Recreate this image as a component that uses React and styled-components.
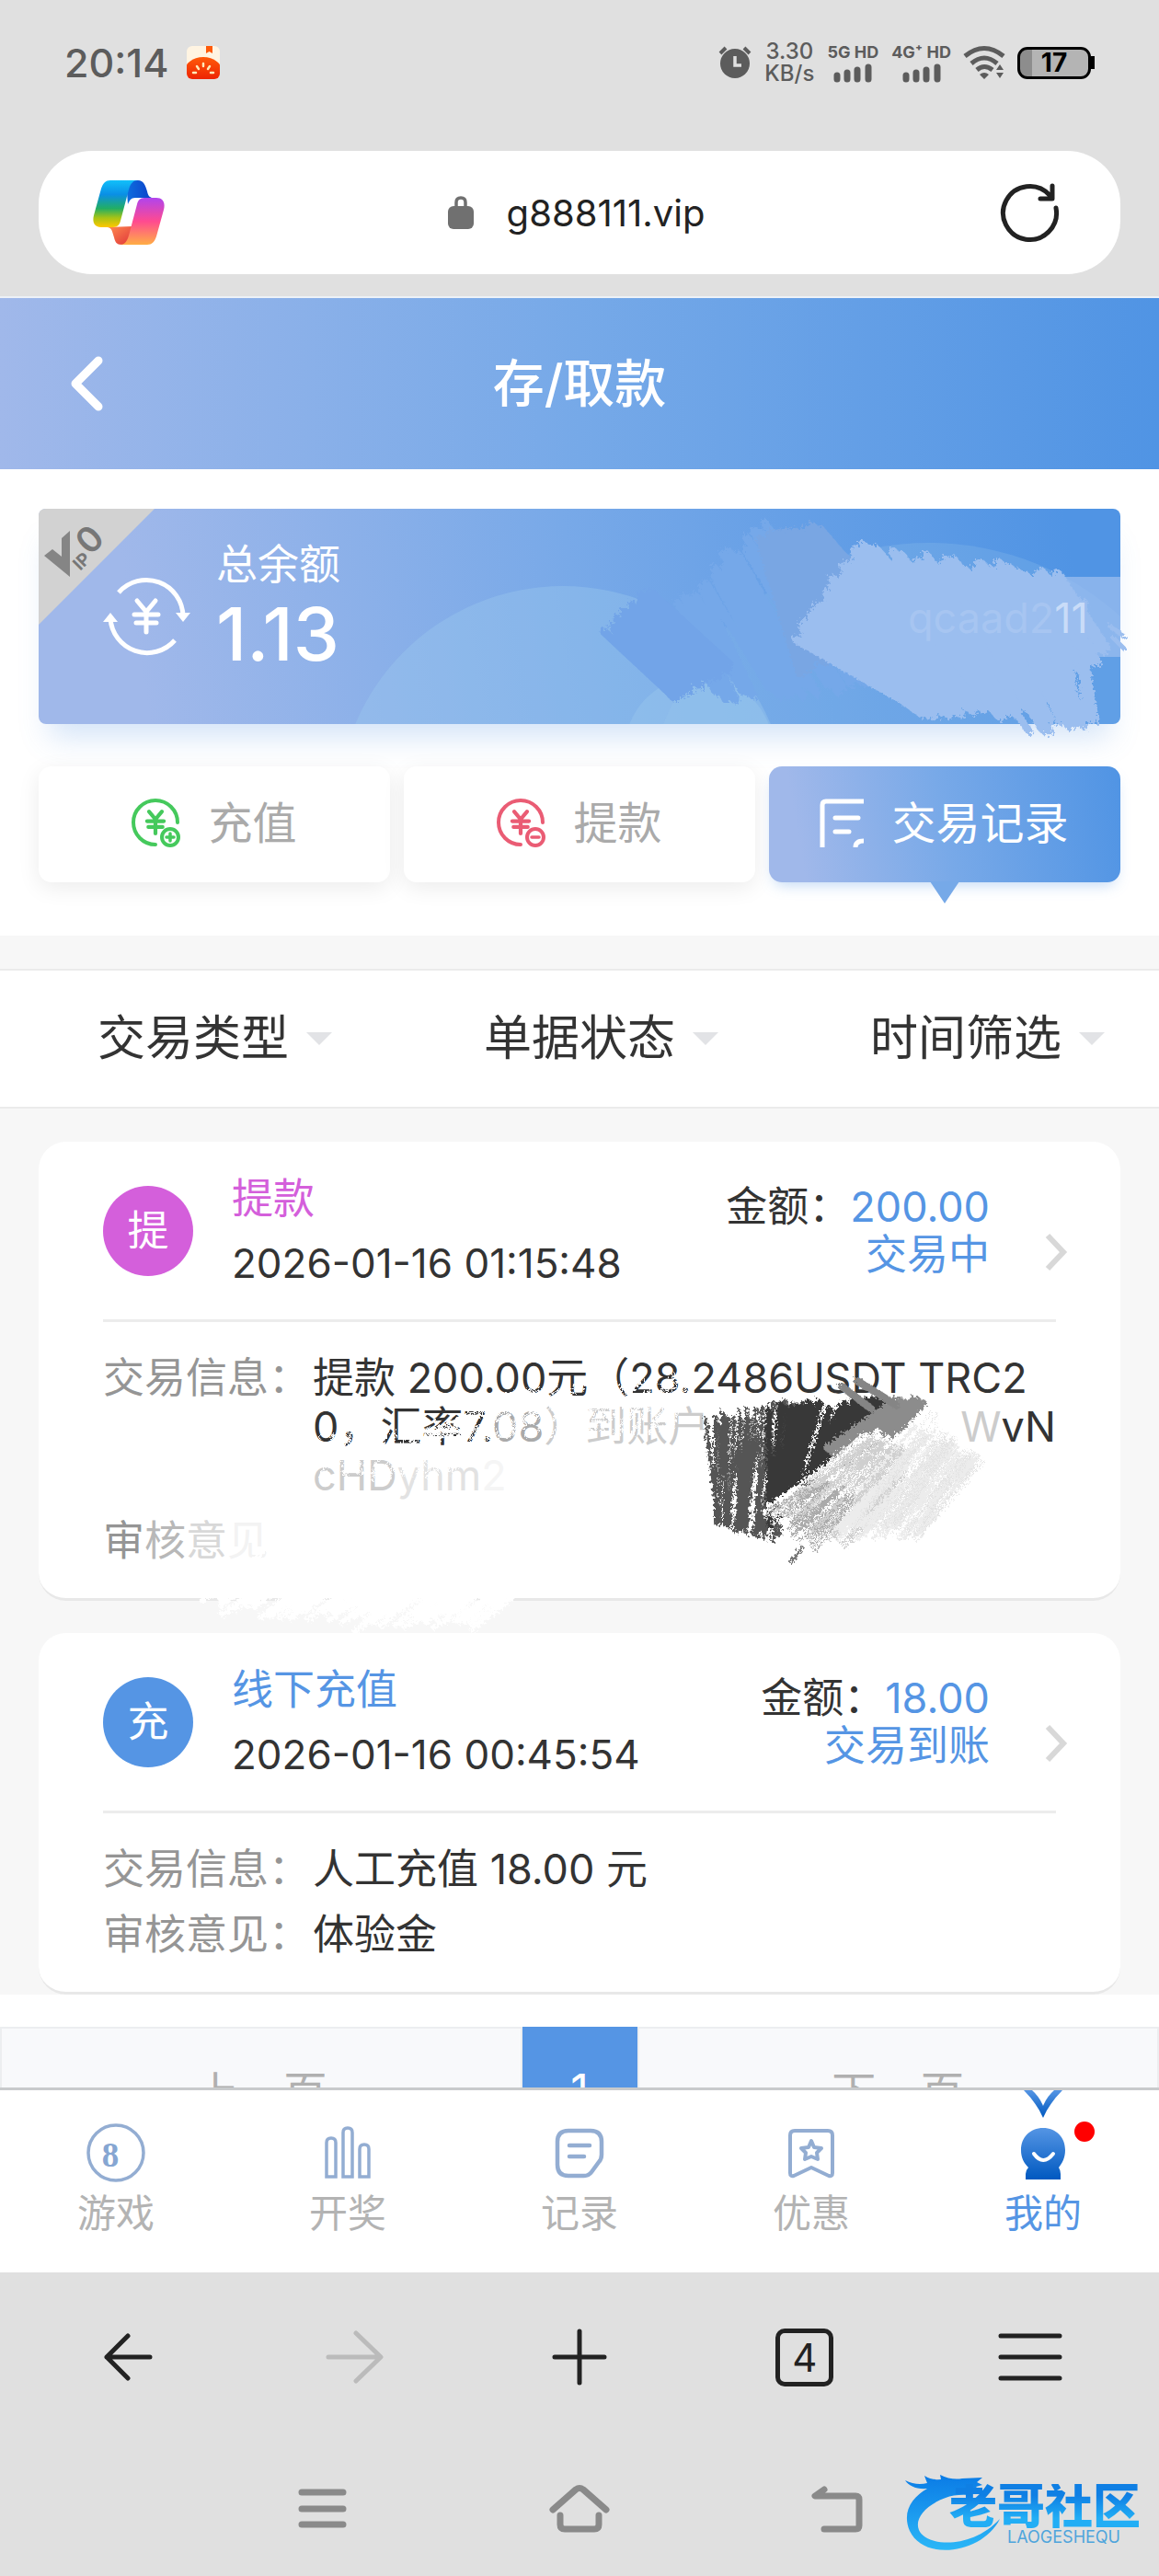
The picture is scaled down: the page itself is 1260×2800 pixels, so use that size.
import React from 'react';
import styled, { createGlobalStyle } from 'styled-components';

//#region layout
const GlobalStyle = createGlobalStyle`
    * {
        box-sizing: border-box;
    }

    body {
        margin: 0;
        background: #e0e0e0;
        color: #333;
        font-family: Inter, "Noto Sans CJK SC", sans-serif;
        font-size: 45px;
    }

    button, select {
        margin: 0;
        padding: 0;
        border: 0;
        background: none;
        color: inherit;
        font: inherit;
    }

    a {
        color: inherit;
        text-decoration: none;
    }

    svg {
        display: block;
        flex-shrink: 0;
        overflow: visible;
    }
`;

const Screen = styled.div`
    position: relative;
    display: flex;
    flex-direction: column;
    overflow: hidden;
`;

const StatusBar = styled.header`
    display: flex;
    align-items: center;
    justify-content: space-between;
    height: 136px;
    padding: 0 74px 0 70px;
    color: #5c5c5c;
`;

const StatusGroup = styled.div`
    display: flex;
    align-items: center;
    gap: ${({ $gap }) => $gap}px;
`;

const Clock = styled.time`
    font-size: 43px;
    font-weight: 500;
    line-height: 48px;
`;

const Speed = styled.div`
    display: flex;
    flex-direction: column;
    align-items: center;
    font-size: 24px;
    font-weight: 500;
    line-height: 24px;
`;

const Signal = styled.div`
    display: flex;
    flex-direction: column;
    align-items: center;
    gap: 3px;
    font-size: 18px;
    font-weight: 700;
    line-height: 20px;
`;

const Battery = styled.div`
    display: flex;
    align-items: center;
    justify-content: center;
    position: relative;
    width: 80px;
    height: 35px;
    border: 3px solid #000;
    border-radius: 11px;
    background: linear-gradient(90deg, #8d8d8d 17%, #b4b4b4 17%);
    color: #000;
    font-size: 28px;
    font-weight: 700;

    &::after {
        content: '';
        position: absolute;
        right: -7px;
        width: 4px;
        height: 14px;
        background: #000;
    }
`;

const AddressBar = styled.div`
    display: grid;
    grid-template-columns: 80px 1fr 80px;
    align-items: center;
    height: 134px;
    margin: 28px 42px 24px;
    padding: 0 66px 0 59px;
    border-radius: 58px;
    background: #fff;
`;

const Address = styled.div`
    display: flex;
    align-items: center;
    justify-content: center;
    gap: 36px;
    color: #222;
    font-size: 40px;
`;

const Refresh = styled.button`
    justify-self: end;
`;

const TitleBar = styled.div`
    display: grid;
    grid-template-columns: 100px 1fr 100px;
    align-items: center;
    height: 188px;
    padding: 0 76px;
    border-top: 2px solid #edf1f7;
    background: linear-gradient(90deg, #a0b8ea, #76a9e8 50%, #5094e4);
    color: #fff;
`;

const Title = styled.h1`
    margin: 0;
    font-size: 56px;
    font-weight: 500;
    line-height: 70px;
    text-align: center;
`;

const Wallet = styled.section`
    padding: 43px 42px 58px;
    background: #fff;
`;

const Balance = styled.div`
    position: relative;
    display: flex;
    align-items: center;
    gap: 28px;
    height: 234px;
    padding-left: 70px;
    border-radius: 8px;
    background: linear-gradient(80deg, #a0b8ea 10%, #78a9e8 50%, #5094e4 95%);
    box-shadow: 0 26px 30px -12px rgba(85, 149, 228, 0.25);
    color: #fff;
`;

const BalanceArt = styled.svg`
    position: absolute;
    top: 0;
    right: 0;
`;

const Ribbon = styled.svg`
    position: absolute;
    top: 0;
    left: 0;
`;

const BalanceText = styled.div`
    padding-bottom: 22px;
    line-height: 60px;
`;

const BalanceValue = styled.div`
    font-size: 80px;
    font-weight: 500;
    line-height: 90px;
`;

const Account = styled.div`
    position: absolute;
    top: 74px;
    right: 0;
    width: 253px;
    height: 87px;
    padding-left: 22px;
    background: rgba(155, 190, 239, 0.75);
    color: rgba(190, 213, 245, 0.35);
    font-size: 45px;
    line-height: 90px;

    b {
        color: #c9dcf8;
        font-weight: 400;
    }
`;

const Tabs = styled.nav`
    position: relative;
    display: grid;
    grid-template-columns: repeat(3, 1fr);
    gap: 15px;
    margin-top: 46px;
`;

const Tab = styled.button`
    position: relative;
    display: flex;
    align-items: center;
    justify-content: center;
    gap: 30px;
    height: 126px;
    padding-bottom: 10px;
    border-radius: 14px;
    background: ${({ $active }) => ($active ? 'linear-gradient(80deg, #a0b8ea 10%, #78a9e8 50%, #5094e4)' : '#fff')};
    box-shadow: ${({ $active }) => ($active ? '0 8px 16px -6px rgba(85, 149, 228, 0.4)' : '0 6px 24px rgba(0, 0, 0, 0.08)')};
    color: ${({ $active }) => ($active ? '#fff' : '#aaa')};
    font-size: 48px;

    svg {
        margin-top: 8px;
    }

    &::after {
        content: '';
        display: ${({ $active }) => ($active ? 'block' : 'none')};
        position: absolute;
        top: 125px;
        border: 16px solid transparent;
        border-top: 24px solid #76a9e8;
        border-bottom: 0;
    }
`;

const Filters = styled.div`
    display: grid;
    grid-template-columns: repeat(3, 1fr);
    margin-top: 36px;
    border-top: 2px solid #ebebeb;
    border-bottom: 2px solid #ebebeb;
    background: #fff;
`;

const Filter = styled.label`
    display: flex;
    align-items: center;
    gap: 18px;
    height: 148px;
    padding-left: 106px;

    select {
        appearance: none;
        font-size: 52px;
        line-height: 76px;
    }
`;

const Content = styled.main`
    background: #f7f7f7;
`;

const Records = styled.div`
    display: flex;
    flex-direction: column;
    gap: 35px;
    padding: 36px 42px 0;
`;

const Record = styled.article`
    position: relative;
    padding: 0 70px 36px;
    border-bottom: 3px solid #e8e8e8;
    border-radius: 30px;
    background: #fff;
`;

const RecordHead = styled.div`
    display: flex;
    align-items: center;
    height: 196px;
    border-bottom: 3px solid #ececec;
`;

const Avatar = styled.div`
    width: 98px;
    height: 98px;
    margin-right: 42px;
    border-radius: 50%;
    background: ${({ $color }) => $color};
    color: #fff;
    line-height: 98px;
    text-align: center;
`;

const Kind = styled.div`
    color: ${({ $color }) => $color};
    line-height: 70px;
`;

const When = styled.time`
    display: block;
    font-size: 44px;
    line-height: 70px;
`;

const Amount = styled.div`
    margin-left: auto;
    line-height: 52px;
    text-align: right;

    em {
        color: #5595e4;
        font-style: normal;
    }
`;

const More = styled.a`
    align-self: flex-end;
    margin: 0 -12px 52px 60px;
`;

const Details = styled.dl`
    display: grid;
    grid-template-columns: 228px 1fr;
    row-gap: 18px;
    margin: 34px 0 0;
    line-height: 53px;
`;

const Label = styled.dt`
    color: #959595;
    white-space: nowrap;
`;

const Value = styled.dd`
    margin: 0;
    white-space: nowrap;
`;

const Line = styled.div`
    display: flex;
    justify-content: space-between;
`;

const Faint = styled.span`
    color: ${({ $color }) => $color};
`;

const Smudge = styled.svg`
    position: absolute;
    top: 240px;
    left: 0;
`;

const Pager = styled.nav`
    display: grid;
    grid-template-columns: 1fr 125px 1fr;
    height: 101px;
    overflow: hidden;
    padding-top: 35px;
    background: #fff;
`;

const PagerButton = styled.button`
    height: 136px;
    border: ${({ $active }) => ($active ? '0' : '2px solid #eceef0')};
    background: ${({ $active }) => ($active ? '#5595e4' : '#f8f9fb')};
    color: ${({ $active }) => ($active ? '#fff' : '#b0b0b0')};
    font-size: 48px;
`;

const TabBar = styled.nav`
    display: grid;
    grid-template-columns: repeat(5, 1fr);
    border-top: 3px solid #c8cacc;
    background: #fff;
`;

const TabLink = styled.a`
    position: relative;
    display: flex;
    flex-direction: column;
    align-items: center;
    gap: 4px;
    height: 198px;
    padding-top: 36px;
    color: ${({ $active }) => ($active ? '#5595e4' : '#b3b3b3')};
    font-size: 42px;
    line-height: 60px;
`;

const BrowserBar = styled.nav`
    display: grid;
    grid-template-columns: repeat(5, 1fr);
    height: 184px;
    padding: 0 18px;

    button {
        display: flex;
        align-items: center;
        justify-content: center;
        color: #222;
    }
`;

const TabCount = styled.span`
    width: 63px;
    height: 63px;
    border: 5px solid #222;
    border-radius: 10px;
    font-size: 42px;
    line-height: 54px;
`;

const SystemBar = styled.nav`
    display: grid;
    grid-template-columns: repeat(3, 1fr);
    height: 146px;
    padding: 0 210px;
    color: #8a8a8a;

    button {
        display: flex;
        align-items: center;
        justify-content: center;
    }
`;

const Watermark = styled.div`
    position: absolute;
    right: 20px;
    bottom: 34px;
    padding-left: 48px;
    font-weight: 900;
    text-align: right;

    svg {
        position: absolute;
        top: -14px;
        left: 0;
    }
`;

const WatermarkName = styled.div`
    position: relative;
    background: linear-gradient(#0f7fe4 25%, #22aef5 75%);
    background-clip: text;
    color: transparent;
    font-size: 52px;
    line-height: 50px;
`;

const WatermarkLatin = styled.div`
    padding-right: 22px;
    color: #4fa5dc;
    font-size: 18px;
    font-weight: 400;
    line-height: 16px;
`;
//#endregion

//#region icons
const stroke = { fill: 'none', stroke: 'currentColor', strokeLinecap: 'round', strokeLinejoin: 'round' };

const BookmarkApp = () => (
    <svg width="36" height="36" viewBox="0 0 36 36">
        <defs>
            <linearGradient id="tomato" x2="0" y2="1">
                <stop offset="0" stopColor="#ff5a0a" />
                <stop offset="1" stopColor="#e60d00" />
            </linearGradient>
            <clipPath id="appClip"><rect width="36" height="36" rx="6" /></clipPath>
        </defs>
        <g clipPath="url(#appClip)">
            <rect width="36" height="36" fill="#fff4e2" />
            <path d="M21 0h7v8l-3.500-2-3.500 2z" fill="#ff5a0a" />
            <ellipse cx="18" cy="29" rx="21" ry="17" fill="url(#tomato)" />
            <path d="M18 19v3M11 22l2 3M25 22l-2 3M7 29h3M29 29h-3" stroke="#ffe9b8" strokeWidth="2.500" strokeLinecap="round" />
        </g>
    </svg>
);

const Alarm = () => (
    <svg width="36" height="36" viewBox="0 0 36 36">
        <circle cx="18" cy="19" r="16" fill="#5c5c5c" />
        <path d="M2 8l6-6M34 8l-6-6" stroke="#5c5c5c" strokeWidth="4" />
        <path d="M18 11v10h7" fill="none" stroke="#e0e0e0" strokeWidth="3.500" />
    </svg>
);

const Bars = () => (
    <svg width="42" height="19" viewBox="0 0 42 19">
        <path d="M4 12v4M15 9v7M26 6v10M38 3v13" stroke="#5c5c5c" strokeWidth="7" strokeLinecap="round" />
    </svg>
);

const Wifi = () => (
    <svg width="44" height="36" viewBox="0 0 44 36">
        <g fill="none" stroke="#5c5c5c" strokeWidth="5">
            <path d="M1 11Q22-6 43 11" />
            <path d="M8 19Q22 7 36 19" />
            <path d="M14 26Q22 19 31 26" />
        </g>
        <path d="M17 31q5-4 10 0l-5 5zM35 26l4-6 4 6zM35 29l4 6 4-6z" fill="#5c5c5c" />
    </svg>
);

const Copilot = () => (
    <svg width="78" height="70" viewBox="0 0 78 70">
        <defs>
            <linearGradient id="cpLeft" x2="0" y2="1">
                <stop offset="0" stopColor="#12c0fa" />
                <stop offset="0.300" stopColor="#0a8fe6" />
                <stop offset="0.600" stopColor="#22ae64" />
                <stop offset="0.800" stopColor="#a7c315" />
                <stop offset="1" stopColor="#ffc800" />
            </linearGradient>
            <linearGradient id="cpRight" x2="0" y2="1">
                <stop offset="0" stopColor="#b044ee" />
                <stop offset="0.500" stopColor="#ff4a90" />
                <stop offset="1" stopColor="#ffae45" />
            </linearGradient>
            <linearGradient id="cpTop">
                <stop offset="0" stopColor="#0d6fe0" />
                <stop offset="1" stopColor="#0d3fc8" />
            </linearGradient>
            <linearGradient id="cpBottom" x2="1" y2="1">
                <stop offset="0" stopColor="#ff8c50" />
                <stop offset="1" stopColor="#e0353a" />
            </linearGradient>
        </defs>
        <path d="M36 0h13c6 0 8 5 10 12 1 5 3 7 6 7H46c-5 0-6 3-8 7z" fill="url(#cpTop)" />
        <path d="M16 51c5 1 5 5 7 11 1 5 3 8 8 8h8l4-20z" fill="url(#cpBottom)" />
        <path d="M19 0h30c-5 0-8 3-10 10l-9 34c-1 4-3 7-8 7H9c-7 0-10-5-8-13L9 9c2-6 5-9 10-9z" fill="url(#cpLeft)" />
        <path d="M59 70H29c5 0 8-3 10-10l9-34c1-4 3-7 8-7h13c7 0 10 5 8 13l-8 29c-2 6-5 9-10 9z" fill="url(#cpRight)" />
    </svg>
);

const Lock = () => (
    <svg width="28" height="36" viewBox="0 0 28 36">
        <path d="M9 14V7q0-5 5-5t5 5v7" fill="none" stroke="#707070" strokeWidth="3.500" />
        <rect y="11" width="28" height="25" rx="6" fill="#707070" />
    </svg>
);

const RefreshIcon = () => (
    <svg width="64" height="64" viewBox="0 0 64 64" {...stroke} strokeWidth="5" color="#222">
        <path d="M60 27A29 29 0 1 1 53 13M56 3v14H43" />
    </svg>
);

const BackChevron = () => (
    <svg width="36" height="60" viewBox="0 0 36 60" {...stroke} strokeWidth="9">
        <path d="M31 5L6 30l25 25" />
    </svg>
);

const Yuan = ({ x, y, s, w }) => (
    <path transform={`translate(${x} ${y}) scale(${s})`} d="M-10-17L0-5 10-17M0-5v22M-13-2h26M-11 7h22" strokeWidth={w} />
);

const BalanceIcon = () => (
    <svg width="95" height="84" viewBox="0 0 95 84" {...stroke} strokeWidth="5">
        <path d="M17 16A40 40 0 0 1 87 42M78 68A40 40 0 0 1 8 44" strokeLinecap="butt" />
        <path d="M79 38h16l-8 10zM0 48h16L8 38z" fill="currentColor" stroke="none" />
        <Yuan x={47} y={42} s={1} w={5} />
    </svg>
);

const MoneyIcon = ({ color, minus }) => (
    <svg width="53" height="52" viewBox="0 0 53 52" {...stroke} color={color} strokeWidth="4">
        <path d="M26 49A24 24 0 1 1 50 25" />
        <Yuan x={26} y={25} s={0.7} w={6} />
        <circle cx="42" cy="41" r="9" strokeWidth="4" />
        <path d={minus ? 'M38 41h8' : 'M38 41h8M42 37v8'} strokeWidth="3.500" />
    </svg>
);

const ListIcon = () => (
    <svg width="47" height="52" viewBox="0 0 47 52" {...stroke} strokeWidth="5">
        <path d="M2 52V6q0-4 4-4h41M38 52q0-7 9-7" strokeLinecap="butt" />
        <path d="M16 20h25M16 35h15" />
    </svg>
);

const Caret = () => (
    <svg width="28" height="14" viewBox="0 0 28 14">
        <path d="M0 0h28L14 14z" fill="#e2e3e6" />
    </svg>
);

const MoreIcon = () => (
    <svg width="24" height="42" viewBox="0 0 24 42">
        <path d="M3 3l17 18L3 39" fill="none" stroke="#d8d8d8" strokeWidth="6" />
    </svg>
);

const GameIcon = () => (
    <svg width="64" height="64" viewBox="0 0 64 64">
        <circle cx="32" cy="32" r="30" fill="none" stroke="#93add2" strokeWidth="3.500" />
        <text x="26" y="47" fill="#86a6d2" fontFamily="Liberation Serif, serif" fontSize="37" fontWeight="700" textAnchor="middle">8</text>
    </svg>
);

const DrawIcon = () => (
    <svg width="64" height="64" viewBox="0 0 64 64" {...stroke} color="#93add2" strokeWidth="3.500" strokeLinejoin="miter">
        <path d="M9 58V21q0-5 5-5t5 5v37zM27 58V10q0-5 5-5t5 5v48zM45 58V28q0-5 5-5t5 5v30z" />
    </svg>
);

const HistoryIcon = () => (
    <svg width="64" height="64" viewBox="0 0 64 64" {...stroke} color="#93add2" strokeWidth="4.500">
        <path d="M20 8h24q12 0 12 12v14q0 5-3 8l-8 11q-3 4-8 4H20Q8 57 8 45V20Q8 8 20 8zM21 24h22M21 36h16" />
    </svg>
);

const PromoIcon = () => (
    <svg width="64" height="64" viewBox="0 0 64 64" {...stroke} color="#93add2" strokeWidth="4">
        <path d="M14 8h36q5 0 5 5v41q0 4-4 3L32 48 13 57q-4 1-4-3V13q0-5 5-5z" />
        <path d="M32 19l3 7 8 1-5 5 1 7-7-3-7 3 1-7-5-5 8-1z" strokeWidth="4" />
    </svg>
);

const MineIcon = () => (
    <svg width="64" height="64" viewBox="0 0 64 64">
        <defs>
            <linearGradient id="mine" x2="0" y2="1">
                <stop offset="0" stopColor="#5595e4" />
                <stop offset="1" stopColor="#0059c0" />
            </linearGradient>
        </defs>
        <path d="M11-36h9q8 7 12 17 4-10 12-17h9Q39-22 32-6 25-22 11-36z" fill="url(#mine)" />
        <path d="M32 5c14 0 24 10 24 24 0 8-3 14-7 19q2 3 2 7v6H13v-6q0-4 3-7c-5-5-8-11-8-19C8 15 18 5 32 5z" fill="url(#mine)" />
        <path d="M22 33q10 14 21 0" fill="none" stroke="#fff" strokeWidth="4" strokeLinecap="round" />
        <circle cx="77" cy="9" r="11" fill="#f00" />
    </svg>
);

const Dragon = () => (
    <svg width="104" height="88" viewBox="0 0 104 88">
        <defs>
            <linearGradient id="dragon" x2="0" y2="1">
                <stop offset="0" stopColor="#0a7be6" />
                <stop offset="1" stopColor="#2bb7f7" />
            </linearGradient>
        </defs>
        <path
            d="M0 10q12 6 24 3-2-5-3-8 8 5 18 4l-1-5q12 6 24 4l22-1-6 5 6 3-7 2 4 4-14 1 3 4q-16-1-26 3C22 37 10 52 15 64c8 18 56 22 88-12-18 37-82 47-98 13C-4 44 8 28 24 19 12 20 4 16 0 10z"
            fill="url(#dragon)"
        />
    </svg>
);
//#endregion

//#region brush marks
const random = (seed) => () => {
    seed = (seed * 16807) % 2147483647;
    return seed / 2147483647;
};

// parallel strokes running from one edge line to the other
const hatch = (from, to, count, jitter, seed) => {
    const rand = random(seed);
    const shake = () => (rand() - 0.5) * jitter;
    const at = ([x1, y1, x2, y2], t) => `${Math.round(x1 + (x2 - x1) * t + shake())} ${Math.round(y1 + (y2 - y1) * t + shake())}`;
    return Array.from({ length: count }, (_, i) => `M${at(from, i / count)}L${at(to, i / count)}`).join('');
};

const Rough = ({ id, scale }) => (
    <filter id={id} x="-10%" y="-10%" width="120%" height="120%">
        <feTurbulence type="fractalNoise" baseFrequency="0.35" numOctaves="2" seed="4" />
        <feDisplacementMap in="SourceGraphic" scale={scale} />
    </filter>
);

const BalanceMarks = () => (
    <BalanceArt width="1176" height="234" viewBox="0 0 1176 234" aria-hidden="true">
        <defs>
            <Rough id="paint" scale={12} />
            <clipPath id="cardClip"><rect width="1176" height="234" rx="8" /></clipPath>
        </defs>
        <g clipPath="url(#cardClip)" fill="#9cc7ee" fillOpacity="0.4">
            <circle cx="570" cy="329" r="245" />
            <circle cx="718" cy="263" r="81" />
            <circle cx="968" cy="347" r="310" fillOpacity="0.22" />
        </g>
        <g filter="url(#paint)" fill="none" strokeLinecap="round">
            <path d={hatch([690, 115, 790, 15], [740, 205, 900, 190], 30, 14, 11)} stroke="#75a8e9" strokeWidth="9" />
            <path d={hatch([620, 130, 665, 90], [690, 205, 755, 170], 24, 10, 7)} stroke="#72a4e8" strokeWidth="9" />
            <path d={hatch([790, 35, 850, 20], [830, 180, 930, 100], 24, 10, 3)} stroke="#79a6e3" strokeWidth="10" />
            <path d={hatch([830, 140, 895, 40], [960, 225, 1120, 195], 40, 14, 5)} stroke="#9bbeef" strokeWidth="9" />
            <path d={hatch([900, 50, 1120, 80], [1040, 225, 1165, 150], 46, 20, 9)} stroke="#9bbeef" strokeWidth="10" />
            <path d={hatch([1000, 110, 1150, 110], [1080, 235, 1150, 225], 26, 18, 15)} stroke="#9bbeef" strokeWidth="8" />
            <path d="M1165 128l14 10M1168 140l12 12" stroke="#9bbeef" strokeWidth="5" />
        </g>
    </BalanceArt>
);

const RecordMarks = () => (
    <Smudge width="1176" height="300" viewBox="0 0 1176 300" aria-hidden="true">
        <defs>
            <Rough id="chalk" scale={10} />
        </defs>
        <g filter="url(#chalk)" fill="none" strokeLinecap="round">
            <path d={hatch([520, 30, 720, 15], [400, 85, 700, 75], 30, 10, 21)} stroke="#fff" strokeWidth="2" />
            <path d={hatch([300, 80, 480, 60], [290, 125, 460, 125], 22, 10, 25)} stroke="#fff" strokeWidth="2" />
            <path d={hatch([300, 180, 600, 180], [180, 265, 470, 280], 60, 22, 31)} stroke="#fff" strokeWidth="6" />
            <path d={hatch([440, 200, 560, 200], [330, 290, 500, 270], 14, 16, 35)} stroke="#fff" strokeWidth="5" />
            <path d={hatch([732, 62, 830, 45], [732, 170, 805, 192], 28, 14, 41)} stroke="#555" strokeWidth="4" />
            <path d={hatch([800, 50, 925, 45], [795, 175, 870, 95], 26, 12, 43)} stroke="#383838" strokeWidth="7" />
            <path d={hatch([860, 95, 895, 120], [930, 42, 962, 42], 14, 6, 47)} stroke="#8c8c8c" strokeWidth="7" />
            <path d="M873 26L905 50M890 20l42 26" stroke="#858585" strokeWidth="8" />
            <path d={hatch([795, 160, 860, 195], [900, 80, 990, 90], 26, 12, 51)} stroke="#fff" strokeWidth="6" />
            <path d={hatch([797, 163, 880, 200], [900, 82, 960, 100], 34, 14, 53)} stroke="#cfcfcf" strokeWidth="2" />
            <path d={hatch([860, 185, 960, 185], [960, 75, 1025, 110], 26, 16, 57)} stroke="#ececec" strokeWidth="4" />
            <path d={hatch([890, 180, 970, 180], [970, 60, 1026, 110], 22, 16, 59)} stroke="#e0e0e0" strokeWidth="1" />
            <path d={hatch([800, 165, 850, 205], [850, 130, 890, 150], 16, 12, 61)} stroke="#aaa" strokeWidth="2" />
            <path d="M818 217l12-16" stroke="#777" strokeWidth="4" />
        </g>
    </Smudge>
);
//#endregion

const filters = ['交易类型', '单据状态', '时间筛选'];

const menu = [
    { label: '游戏', Icon: GameIcon },
    { label: '开奖', Icon: DrawIcon },
    { label: '记录', Icon: HistoryIcon },
    { label: '优惠', Icon: PromoIcon },
    { label: '我的', Icon: MineIcon, active: true },
];

const RecordTop = ({ badge, color, kind, time, amount, status }) => (
    <RecordHead>
        <Avatar $color={color}>{badge}</Avatar>
        <div>
            <Kind $color={color}>{kind}</Kind>
            <When>{time}</When>
        </div>
        <Amount>
            <div>金额：<em>{amount}</em></div>
            <em>{status}</em>
        </Amount>
        <More href="#detail" aria-label={kind}><MoreIcon /></More>
    </RecordHead>
);

const App = () => {
    return (
        <Screen>
            <GlobalStyle />
            <StatusBar>
                <StatusGroup $gap={20}>
                    <Clock>20:14</Clock>
                    <BookmarkApp />
                </StatusGroup>
                <StatusGroup $gap={14}>
                    <Alarm />
                    <Speed><span>3.30</span><span>KB/s</span></Speed>
                    <Signal>5G HD<Bars /></Signal>
                    <Signal>4G⁺ HD<Bars /></Signal>
                    <Wifi />
                    <Battery>17</Battery>
                </StatusGroup>
            </StatusBar>
            <AddressBar>
                <Copilot />
                <Address><Lock />g888111.vip</Address>
                <Refresh aria-label="刷新"><RefreshIcon /></Refresh>
            </AddressBar>

            <TitleBar>
                <a href="#back" aria-label="返回"><BackChevron /></a>
                <Title>存/取款</Title>
            </TitleBar>
            <Wallet>
                <Balance>
                    <BalanceMarks />
                    <Ribbon width="126" height="126" viewBox="0 0 126 126">
                        <path d="M8 0h118L0 126V8q0-8 8-8z" fill="#d2d2d2" />
                        <path d="M6 51l9-7 10 8V32l9-8v50z" fill="#858585" />
                        <g fill="#777" fontFamily="Inter, sans-serif" fontWeight="700" transform="rotate(-45 46 56)">
                            <text x="37" y="64" fontSize="19">IP</text>
                            <text x="56" y="60" fontSize="38" fontWeight="600">0</text>
                        </g>
                    </Ribbon>
                    <BalanceIcon />
                    <BalanceText>
                        总余额
                        <BalanceValue>1.13</BalanceValue>
                    </BalanceText>
                    <Account>qcaad2<b>11</b></Account>
                </Balance>
                <Tabs>
                    <Tab><MoneyIcon color="#45c95c" />充值</Tab>
                    <Tab><MoneyIcon color="#ea5c74" minus />提款</Tab>
                    <Tab $active><ListIcon />交易记录</Tab>
                </Tabs>
            </Wallet>

            <Content>
                <Filters>
                    {filters.map((name) => (
                        <Filter key={name}>
                            <select aria-label={name}>
                                <option>{name}</option>
                            </select>
                            <Caret />
                        </Filter>
                    ))}
                </Filters>
                <Records>
                    <Record>
                        <RecordTop badge="提" color="#d45fdb" kind="提款" time="2026-01-16 01:15:48" amount="200.00" status="交易中" />
                        <Details>
                            <Label>交易信息：</Label>
                            <Value>
                                提款 200.00元（28.2486USDT TRC2
                                <Line>
                                    <span>0，汇率7.<Faint $color="#aaa">08</Faint><Faint $color="#ccc">）到账户</Faint></span>
                                    <span><Faint $color="#ccc">W</Faint>vN</span>
                                </Line>
                                <Faint $color="#ccc">cHD</Faint><Faint $color="#e2e2e2">yhm</Faint><Faint $color="#f5f5f5">2</Faint>
                            </Value>
                            <Label>审<Faint $color="#b8b8b8">核</Faint><Faint $color="#d8d8d8">意</Faint><Faint $color="#f3f3f3">见</Faint></Label>
                        </Details>
                        <RecordMarks />
                    </Record>
                    <Record>
                        <RecordTop badge="充" color="#5595e4" kind="线下充值" time="2026-01-16 00:45:54" amount="18.00" status="交易到账" />
                        <Details>
                            <Label>交易信息：</Label>
                            <Value>人工充值 18.00 元</Value>
                            <Label>审核意见：</Label>
                            <Value>体验金</Value>
                        </Details>
                    </Record>
                </Records>
                <Pager>
                    <PagerButton>上一页</PagerButton>
                    <PagerButton $active>1</PagerButton>
                    <PagerButton>下一页</PagerButton>
                </Pager>
            </Content>

            <TabBar>
                {menu.map(({ label, Icon, active }) => (
                    <TabLink key={label} href={`#${label}`} $active={active}>
                        <Icon />
                        {label}
                    </TabLink>
                ))}
            </TabBar>
            <BrowserBar>
                <button aria-label="后退">
                    <svg width="54" height="54" viewBox="0 0 54 54" {...stroke} strokeWidth="5">
                        <path d="M50 27H3M26 4L3 27l23 23" />
                    </svg>
                </button>
                <button aria-label="前进">
                    <svg width="62" height="54" viewBox="0 0 62 54" {...stroke} strokeWidth="5" color="#bbb">
                        <path d="M3 27h56M33 1l27 26-27 26" />
                    </svg>
                </button>
                <button aria-label="新标签页">
                    <svg width="60" height="60" viewBox="0 0 60 60" {...stroke} strokeWidth="5">
                        <path d="M3 30h54M30 2v56" />
                    </svg>
                </button>
                <button aria-label="标签页"><TabCount>4</TabCount></button>
                <button aria-label="菜单">
                    <svg width="70" height="52" viewBox="0 0 70 52" {...stroke} strokeWidth="5">
                        <path d="M3 3h64M3 26h64M3 49h64" />
                    </svg>
                </button>
            </BrowserBar>
            <SystemBar>
                <button aria-label="最近任务">
                    <svg width="53" height="42" viewBox="0 0 53 42" {...stroke} strokeWidth="7">
                        <path d="M4 3h45M4 21h45M4 38h45" />
                    </svg>
                </button>
                <button aria-label="主屏幕">
                    <svg width="66" height="52" viewBox="0 0 66 52" {...stroke} strokeWidth="7">
                        <path d="M4 27L29 5q4-3 8 0l25 22M12 33v10q0 5 5 5h32q5 0 5-5V33" />
                    </svg>
                </button>
                <button aria-label="返回">
                    <svg width="56" height="52" viewBox="0 0 56 52" {...stroke} strokeWidth="7">
                        <path d="M14 5L4 12h44q4 0 4 4v28q0 4-4 4H14" />
                    </svg>
                </button>
            </SystemBar>
            <Watermark>
                <Dragon />
                <WatermarkName>老哥社区</WatermarkName>
                <WatermarkLatin>LAOGESHEQU</WatermarkLatin>
            </Watermark>
        </Screen>
    );
};

export default App;
